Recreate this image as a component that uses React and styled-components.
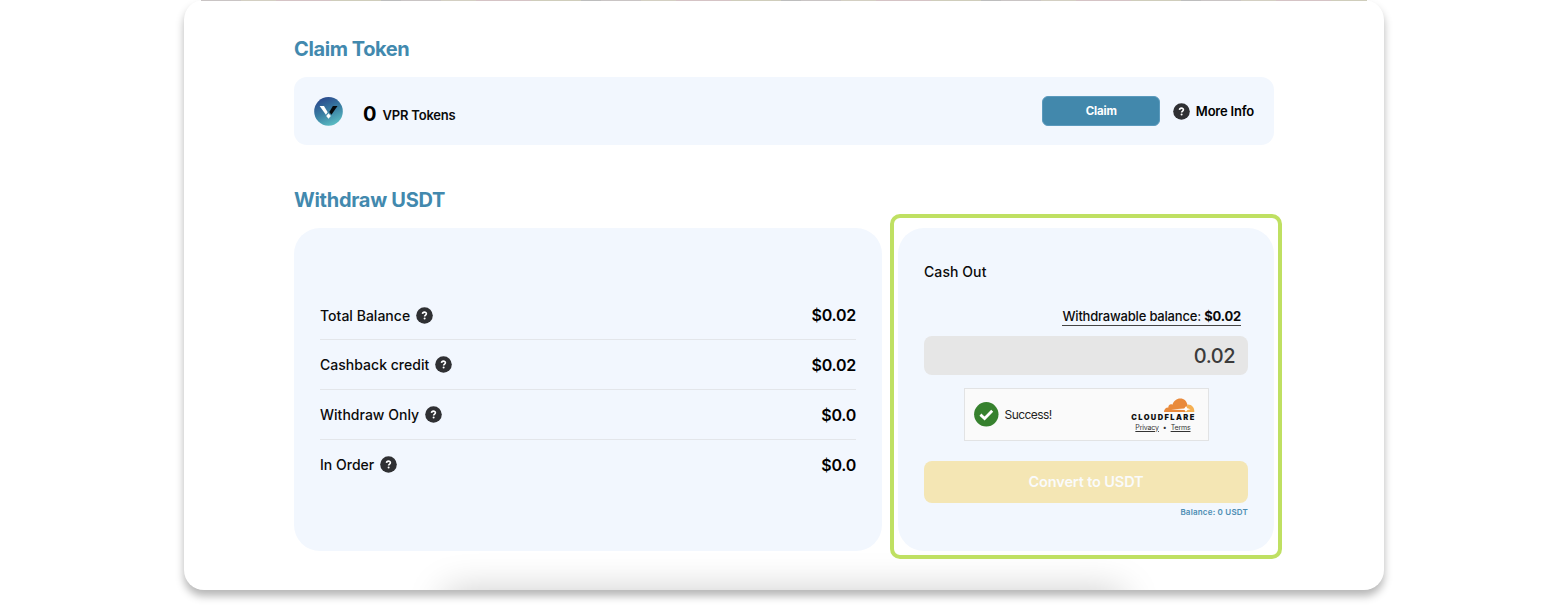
import React from "react";
import styled, { createGlobalStyle } from "styled-components";

const GlobalStyle = createGlobalStyle`
  *, *::before, *::after { box-sizing: border-box; }
  body {
    margin: 0;
    background: #fff;
    color: #0b0b0b;
    font-family: Inter, "Liberation Sans", sans-serif;
    overflow: hidden;
  }
  h2, h3, p { margin: 0; }
`;

const Page = styled.div`
  height: 606px;
  display: flex;
  justify-content: center;
  align-items: flex-start;
`;

const Sheet = styled.main`
  position: relative;
  width: 1200px;
  height: 590px;
  padding: 36px 110px 0;
  background: #fff;
  border-radius: 20px;
  box-shadow: 0 6px 8px rgba(0, 0, 0, 0.29);
`;

const BannerEdge = styled.div`
  position: absolute;
  top: 0;
  left: 17px;
  right: 17px;
  height: 1px;
  background: repeating-linear-gradient(
    90deg,
    #c9c4c4 0 40px,
    #d3cfc2 40px 75px,
    #d5c3c5 75px 130px,
    #cfcdbb 130px 180px,
    #bdbdbd 180px 200px
  );
`;

const BottomShade = styled.div`
  position: absolute;
  inset: 0;
  overflow: hidden;
  border-radius: 20px;
  pointer-events: none;

  &::after {
    content: "";
    position: absolute;
    left: 272px;
    right: 272px;
    top: 602px;
    height: 40px;
    box-shadow: 0 0 38px 10px rgba(0, 0, 0, 0.22);
  }
`;

const Title = styled.h2`
  height: 26px;
  line-height: 26px;
  font-size: 20px;
  font-weight: 700;
  letter-spacing: ${(p) => p.$spacing};
  color: #4289ae;
  white-space: nowrap;
`;

const ClaimPanel = styled.section`
  display: flex;
  align-items: center;
  height: 68px;
  margin: 15px 0 42px;
  padding: 0 20px;
  border-radius: 13px;
  background: #f2f7fe;
`;

const TokenAmount = styled.div`
  display: flex;
  align-items: center;
  gap: 6px;
  margin-left: 20px;
  padding-top: 5px;
  line-height: 24px;
  white-space: nowrap;
`;

const TokenCount = styled.span`
  font-size: 20px;
  font-weight: 700;
  color: #000;
`;

const TokenName = styled.span`
  padding-top: 2px;
  font-size: 13px;
  font-weight: 600;
  letter-spacing: -0.2px;
`;

const ClaimButton = styled.button`
  width: 118px;
  height: 30px;
  margin-left: auto;
  padding: 0;
  border: 1px solid #5b9abd;
  border-radius: 6px;
  background: #4288ac;
  color: #fff;
  font: 700 11.5px/28px Inter, sans-serif;
  letter-spacing: -0.15px;
`;

const MoreInfo = styled.div`
  display: flex;
  align-items: center;
  gap: 6px;
  margin-left: 12.5px;
  font-size: 13px;
  font-weight: 600;
  letter-spacing: -0.2px;
  color: #000;
  white-space: nowrap;
`;

const Panels = styled.div`
  display: flex;
  gap: 16px;
  margin-top: 15px;
`;

const Panel = styled.section`
  position: relative;
  width: ${(p) => p.$width};
  height: 323px;
  padding: ${(p) => p.$padding};
  border-radius: 26px;
  background: #f2f7fe;
`;

const Highlight = styled.div`
  position: absolute;
  inset: -14px -8px -8px;
  border: 4px solid #bfe062;
  border-radius: 10px;
  pointer-events: none;
`;

const BalanceRow = styled.div`
  display: flex;
  align-items: center;
  height: 49.8px;
  padding-top: 1px;
  border-bottom: 1px solid #e3e6ea;
  &:last-child { border-bottom-color: transparent; }
`;

const RowLabel = styled.span`
  margin-right: 6px;
  font-size: 14px;
  font-weight: 500;
  letter-spacing: 0.02px;
  white-space: nowrap;
`;

const RowValue = styled.span`
  margin-left: auto;
  font-size: 16px;
  font-weight: 600;
  letter-spacing: -0.25px;
  color: #000;
`;

const CashTitle = styled.h3`
  height: 20px;
  line-height: 20px;
  font-size: 14px;
  font-weight: 500;
  letter-spacing: 0.08px;
`;

const Withdrawable = styled.div`
  align-self: flex-end;
  height: 17px;
  margin: 27px 7px 0 0;
  line-height: 15px;
  border-bottom: 1.5px solid #444;
  font-size: 13px;
  font-weight: 500;
  letter-spacing: -0.2px;
  white-space: nowrap;
  b { font-weight: 700; }
`;

const AmountField = styled.div`
  height: 39px;
  margin-top: 10px;
  padding-right: 13px;
  border-radius: 8px;
  background: #e6e6e6;
  color: #3b3b3b;
  font-size: 20px;
  font-weight: 500;
  line-height: 40px;
  letter-spacing: -0.5px;
  text-align: right;
`;

const Captcha = styled.div`
  display: flex;
  align-items: center;
  align-self: center;
  width: 245px;
  height: 53px;
  margin-top: 13px;
  padding: 0 13px 0 9px;
  border: 1px solid #e2e3e4;
  background: #fafafa;
`;

const SuccessText = styled.span`
  margin-left: 6px;
  font-size: 12px;
  letter-spacing: -0.55px;
  color: #232323;
`;

const Brand = styled.div`
  display: flex;
  flex-direction: column;
  align-items: flex-end;
  margin-left: auto;
  padding-top: 1px;
`;

const BrandName = styled.span`
  height: 9px;
  line-height: 9px;
  font-size: 7.5px;
  font-weight: 900;
  letter-spacing: 1.4px;
  margin-right: -1.2px;
  color: #111;
`;

const BrandLinks = styled.div`
  display: flex;
  gap: 4px;
  margin: 1px 4px 0 0;
  font-size: 7px;
  line-height: 10px;
  letter-spacing: -0.15px;
  color: #333;
  u { text-underline-offset: 1px; }
`;

const ConvertButton = styled.button`
  height: 42px;
  margin-top: 20px;
  padding: 0;
  border: 0;
  border-radius: 8px;
  background: #f4e6b4;
  color: #fafbfc;
  font: 600 14.5px/42px Inter, sans-serif;
  letter-spacing: -0.13px;
`;

const UsdtBalance = styled.p`
  margin-top: 3px;
  font-size: 8px;
  line-height: 13px;
  font-weight: 600;
  letter-spacing: 0.2px;
  color: #4c8db3;
  text-align: right;
`;

const CashBody = styled.div`
  display: flex;
  flex-direction: column;
`;

const Icon = styled.svg`
  display: block;
  flex: none;
`;

function Help() {
  return (
    <Icon width="17" height="17" viewBox="0 0 17 17">
      <circle cx="8.5" cy="8.5" r="8.3" fill="#2f3033" />
      <path d="M6.5 6.9C6.6 4.6 10.5 4.6 10.4 6.8C10.4 8.1 8.6 8 8.6 9.6" fill="none" stroke="#fff" strokeWidth="1.6" />
      <circle cx="8.6" cy="11.6" r="1" fill="#fff" />
    </Icon>
  );
}

function TokenLogo() {
  return (
    <Icon width="29" height="29" viewBox="0 0 29 29">
      <defs>
        <linearGradient id="token" x1="0.25" y1="0" x2="0.7" y2="1">
          <stop offset="0" stopColor="#29468c" />
          <stop offset="0.5" stopColor="#397da2" />
          <stop offset="1" stopColor="#5cc0c5" />
        </linearGradient>
      </defs>
      <circle cx="14.5" cy="14.4" r="14.3" fill="url(#token)" />
      <path d="M5.6 9H10L13.7 15.2L11.9 17.8Z" fill="#fff" />
      <path d="M14.5 16.2L16.8 18.9L14.5 21.7L12.2 18.9Z" fill="#fff" />
      <path d="M18.9 9H23.5L17.4 17.8L15.3 15.1Z" fill="#05080b" />
    </Icon>
  );
}

function SuccessIcon() {
  return (
    <Icon width="25" height="25" viewBox="0 0 25 25">
      <circle cx="12.3" cy="12.3" r="12.2" fill="#36812e" />
      <path d="M6.4 12.6L10.6 16.5L18.2 8.8" fill="none" stroke="#fff" strokeWidth="2.8" />
    </Icon>
  );
}

function Cloud() {
  return (
    <Icon width="31" height="15" viewBox="0 0 31 15">
      <path d="M0 14C0 11.2 1.8 9.4 4.4 9.5C4 7.3 6.4 5.6 8.4 6.7C9.8 2.8 12.6.5 16.2.5C20.2.5 22.8 3.2 23.5 7L22 14Z" fill="#e98a3b" />
      <path d="M23.5 6.6C27.8 6.4 30.7 9.8 30.3 14H20.8L22.7 9.8Z" fill="#f5b052" />
      <path d="M7 11.4L20.2 10.6L22.2 8L23.2 10.2L26.6 11.2L23.5 12.1L21.9 13.8L20.5 11.9Z" fill="#fff" />
    </Icon>
  );
}

const balances = [
  { label: "Total Balance", value: "$0.02" },
  { label: "Cashback credit", value: "$0.02" },
  { label: "Withdraw Only", value: "$0.0" },
  { label: "In Order", value: "$0.0" },
];

export default function App() {
  return (
    <Page>
      <GlobalStyle />
      <Sheet>
        <BannerEdge />
        <BottomShade />
        <Title $spacing="-0.4px">Claim Token</Title>
        <ClaimPanel>
          <TokenLogo />
          <TokenAmount>
            <TokenCount>0</TokenCount>
            <TokenName>VPR Tokens</TokenName>
          </TokenAmount>
          <ClaimButton type="button">Claim</ClaimButton>
          <MoreInfo>
            <Help />
            <span>More Info</span>
          </MoreInfo>
        </ClaimPanel>
        <Title $spacing="-0.28px">Withdraw USDT</Title>
        <Panels>
          <Panel $width="588px" $padding="62.3px 26px 0">
            {balances.map((row) => (
              <BalanceRow key={row.label}>
                <RowLabel>{row.label}</RowLabel>
                <Help />
                <RowValue>{row.value}</RowValue>
              </BalanceRow>
            ))}
          </Panel>
          <Panel $width="376px" $padding="34px 26px 0">
            <Highlight />
            <CashBody>
              <CashTitle>Cash Out</CashTitle>
              <Withdrawable>
                Withdrawable balance: <b>$0.02</b>
              </Withdrawable>
              <AmountField>0.02</AmountField>
              <Captcha>
                <SuccessIcon />
                <SuccessText>Success!</SuccessText>
                <Brand>
                  <Cloud />
                  <BrandName>CLOUDFLARE</BrandName>
                  <BrandLinks>
                    <u>Privacy</u>
                    <span>•</span>
                    <u>Terms</u>
                  </BrandLinks>
                </Brand>
              </Captcha>
              <ConvertButton type="button">Convert to USDT</ConvertButton>
              <UsdtBalance>Balance: 0 USDT</UsdtBalance>
            </CashBody>
          </Panel>
        </Panels>
      </Sheet>
    </Page>
  );
}
